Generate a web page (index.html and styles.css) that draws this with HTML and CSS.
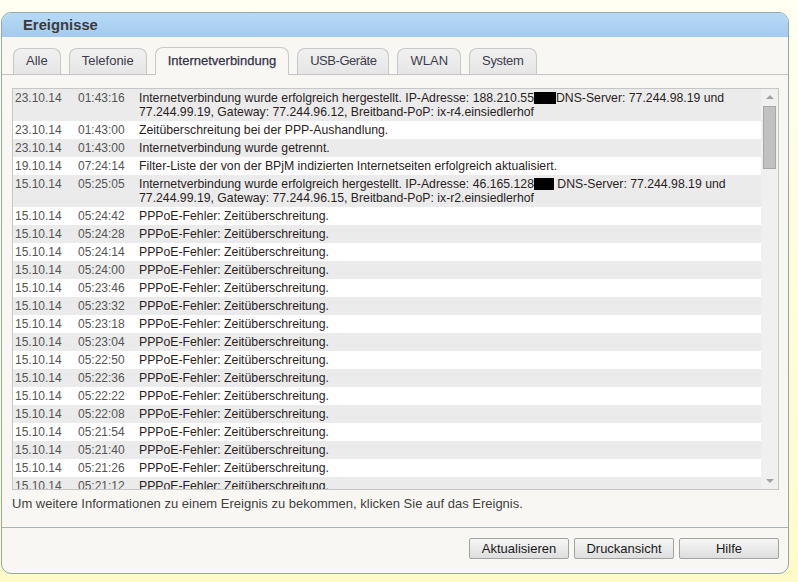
FILE: index.html
```html
<!DOCTYPE html>
<html lang="de">
<head>
<meta charset="utf-8">
<title>Ereignisse</title>
<link rel="stylesheet" href="styles.css">
</head>
<body>
<div class="panel">
  <div class="header">Ereignisse</div>
  <div class="tabbar">
    <div class="tab">Alle</div>
    <div class="tab">Telefonie</div>
    <div class="tab active">Internetverbindung</div>
    <div class="tab tight">USB-Geräte</div>
    <div class="tab">WLAN</div>
    <div class="tab tight-s">System</div>
  </div>
  <div class="content">
    <div class="log">
      <div class="rows">
        <div class="row"><span class="d">23.10.14</span><span class="t">01:43:16</span><span class="m">Internetverbindung wurde erfolgreich hergestellt. IP-Adresse: 188.210.55<span class="redact r1"></span>DNS-Server: 77.244.98.19 und 77.244.99.19, Gateway: 77.244.96.12, Breitband-PoP: ix-r4.einsiedlerhof</span></div>
        <div class="row"><span class="d">23.10.14</span><span class="t">01:43:00</span><span class="m">Zeitüberschreitung bei der PPP-Aushandlung.</span></div>
        <div class="row"><span class="d">23.10.14</span><span class="t">01:43:00</span><span class="m">Internetverbindung wurde getrennt.</span></div>
        <div class="row"><span class="d">19.10.14</span><span class="t">07:24:14</span><span class="m">Filter-Liste der von der BPjM indizierten Internetseiten erfolgreich aktualisiert.</span></div>
        <div class="row"><span class="d">15.10.14</span><span class="t">05:25:05</span><span class="m">Internetverbindung wurde erfolgreich hergestellt. IP-Adresse: 46.165.128<span class="redact r2"></span> DNS-Server: 77.244.98.19 und 77.244.99.19, Gateway: 77.244.96.15, Breitband-PoP: ix-r2.einsiedlerhof</span></div>
        <div class="row"><span class="d">15.10.14</span><span class="t">05:24:42</span><span class="m">PPPoE-Fehler: Zeitüberschreitung.</span></div>
        <div class="row"><span class="d">15.10.14</span><span class="t">05:24:28</span><span class="m">PPPoE-Fehler: Zeitüberschreitung.</span></div>
        <div class="row"><span class="d">15.10.14</span><span class="t">05:24:14</span><span class="m">PPPoE-Fehler: Zeitüberschreitung.</span></div>
        <div class="row"><span class="d">15.10.14</span><span class="t">05:24:00</span><span class="m">PPPoE-Fehler: Zeitüberschreitung.</span></div>
        <div class="row"><span class="d">15.10.14</span><span class="t">05:23:46</span><span class="m">PPPoE-Fehler: Zeitüberschreitung.</span></div>
        <div class="row"><span class="d">15.10.14</span><span class="t">05:23:32</span><span class="m">PPPoE-Fehler: Zeitüberschreitung.</span></div>
        <div class="row"><span class="d">15.10.14</span><span class="t">05:23:18</span><span class="m">PPPoE-Fehler: Zeitüberschreitung.</span></div>
        <div class="row"><span class="d">15.10.14</span><span class="t">05:23:04</span><span class="m">PPPoE-Fehler: Zeitüberschreitung.</span></div>
        <div class="row"><span class="d">15.10.14</span><span class="t">05:22:50</span><span class="m">PPPoE-Fehler: Zeitüberschreitung.</span></div>
        <div class="row"><span class="d">15.10.14</span><span class="t">05:22:36</span><span class="m">PPPoE-Fehler: Zeitüberschreitung.</span></div>
        <div class="row"><span class="d">15.10.14</span><span class="t">05:22:22</span><span class="m">PPPoE-Fehler: Zeitüberschreitung.</span></div>
        <div class="row"><span class="d">15.10.14</span><span class="t">05:22:08</span><span class="m">PPPoE-Fehler: Zeitüberschreitung.</span></div>
        <div class="row"><span class="d">15.10.14</span><span class="t">05:21:54</span><span class="m">PPPoE-Fehler: Zeitüberschreitung.</span></div>
        <div class="row"><span class="d">15.10.14</span><span class="t">05:21:40</span><span class="m">PPPoE-Fehler: Zeitüberschreitung.</span></div>
        <div class="row"><span class="d">15.10.14</span><span class="t">05:21:26</span><span class="m">PPPoE-Fehler: Zeitüberschreitung.</span></div>
        <div class="row"><span class="d">15.10.14</span><span class="t">05:21:12</span><span class="m">PPPoE-Fehler: Zeitüberschreitung.</span></div>
      </div>
      <div class="scrollbar">
        <div class="arrow up"></div>
        <div class="track"><div class="thumb"></div></div>
        <div class="arrow down"></div>
      </div>
    </div>
    <div class="hint">Um weitere Informationen zu einem Ereignis zu bekommen, klicken Sie auf das Ereignis.</div>
  </div>
  <div class="footer">
    <button class="btn">Aktualisieren</button>
    <button class="btn">Druckansicht</button>
    <button class="btn">Hilfe</button>
  </div>
</div>
</body>
</html>
```

FILE: styles.css
```css
html, body {
  margin: 0;
  padding: 0;
}
body {
  width: 798px;
  height: 582px;
  overflow: hidden;
  background: linear-gradient(to bottom, #fffff2 0px, #fffde0 200px, #fffbc8 582px);
  font-family: "Liberation Sans", Arial, sans-serif;
  padding-top: 12px;
  padding-left: 1px;
  box-sizing: border-box;
}
.panel {
  width: 788px;
  height: 562px;
  box-sizing: border-box;
  border: 1px solid #91a9a9;
  border-radius: 10px;
  background: #f8f7f3;
  overflow: hidden;
  display: flex;
  flex-direction: column;
}
.header {
  height: 24px;
  line-height: 25px;
  padding-left: 21px;
  font-size: 14.8px;
  font-weight: bold;
  color: #3b3b3b;
  background: linear-gradient(to bottom, #b7daf6, #a4caed);
}
.tabbar {
  display: flex;
  align-items: flex-end;
  gap: 8px;
  padding: 10px 0 0 11px;
  height: 27px;
  border-bottom: 1px solid #c4c4c4;
}
.tab {
  height: 25px;
  line-height: 24px;
  padding: 0 12px;
  border: 1px solid #c8c8c8;
  border-bottom: none;
  border-radius: 8px 8px 0 0;
  background: linear-gradient(to bottom, #f0f0f0, #e6e6e6);
  font-size: 13px;
  color: #3c3c4c;
}
.tab.tight {
  letter-spacing: -0.45px;
}
.tab.tight-s {
  letter-spacing: -0.3px;
}
.tab.active {
  height: 27px;
  line-height: 25px;
  margin-bottom: -1px;
  background: #f8f7f3;
  color: #33334a;
  -webkit-text-stroke: 0.25px #33334a;
}
.content {
  padding: 13px 9px 0 10px;
}
.log {
  height: 402px;
  box-sizing: border-box;
  border: 1px solid #c6c6c6;
  display: flex;
  overflow: hidden;
  background: #f0f0f0;
}
.rows {
  width: 748px;
  flex: none;
  overflow: hidden;
}
.row {
  display: grid;
  grid-template-columns: 63px 61px 1fr;
  padding: 2px 0 2px 2px;
  font-size: 12px;
  line-height: 14px;
  background: #fff;
}
.row:nth-child(odd) {
  background: #ebebeb;
}
.d, .t {
  color: #555;
}
.m {
  color: #2a1e1e;
  font-size: 12.25px;
}
.redact {
  display: inline-block;
  background: #000;
  height: 12px;
  vertical-align: -2px;
}
.r1 { width: 22px; }
.r2 { width: 20px; }
.scrollbar {
  width: 17px;
  flex: none;
  display: flex;
  flex-direction: column;
  align-items: center;
  background: #f0f0f0;
}
.arrow {
  width: 0;
  height: 0;
  border-left: 4px solid transparent;
  border-right: 4px solid transparent;
}
.arrow.up {
  margin-top: 6px;
  border-bottom: 4px solid #a3a3a3;
}
.arrow.down {
  margin-bottom: 6px;
  border-top: 4px solid #a3a3a3;
}
.track {
  flex: 1;
  width: 100%;
  padding-top: 7px;
  display: flex;
  justify-content: center;
}
.thumb {
  width: 11px;
  height: 61px;
  background: #c1c1c1;
  border: 1px solid #a8a8a8;
}
.hint {
  margin-top: 6px;
  font-size: 13px;
  line-height: 15px;
  color: #424242;
}
.footer {
  margin-top: 16px;
  border-top: 1px solid #a5b5b5;
  flex: 1;
  display: flex;
  justify-content: flex-end;
  align-items: flex-start;
  gap: 5px;
  padding: 10px 9px 0 0;
}
.btn {
  width: 100px;
  height: 21px;
  padding: 0;
  font-family: "Liberation Sans", Arial, sans-serif;
  font-size: 13px;
  color: #1a1a1a;
  border: 1px solid #a2a2a2;
  border-radius: 2px;
  background: linear-gradient(to bottom, #f6f6f6, #dedede);
}
```
